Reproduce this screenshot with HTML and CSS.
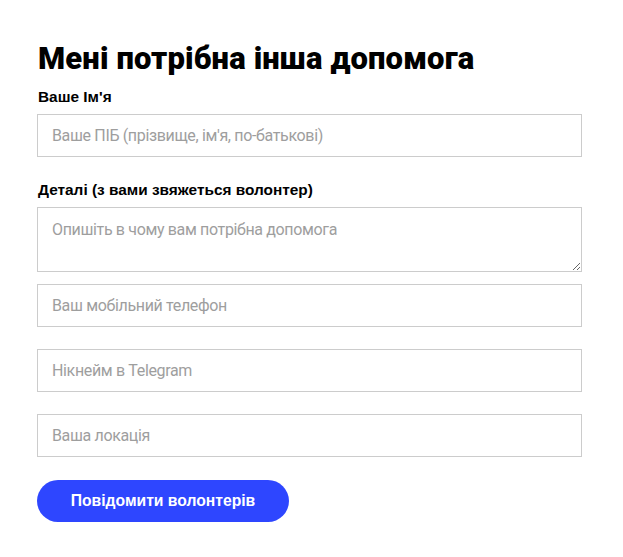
FILE: index.html
```html
<html>
  <head>
    <link rel="stylesheet" href="styles.css">
  </head>
  <body>
    <form class="help-form" onsubmit="return false;">
      <h2 class="title">Мені потрібна інша допомога</h2>

      <label for="name" class="field-label">Ваше Ім'я</label>
      <input type="text" id="name" class="field" placeholder="Ваше ПІБ (прізвище, ім'я, по-батькові)" />

      <label for="details" class="field-label details-label">Деталі (з вами звяжеться волонтер)</label>
      <textarea id="details" class="field area" placeholder="Опишіть в чому вам потрібна допомога"></textarea>

      <input type="tel" class="field phone" placeholder="Ваш мобільний телефон" />
      <input type="text" class="field spaced" placeholder="Нікнейм в Telegram" />
      <input type="text" class="field spaced" placeholder="Ваша локація" />

      <button type="submit" class="submit">Повідомити волонтерів</button>
    </form>
  </body>
</html>
```

FILE: styles.css
```css
*,
*::before,
*::after {
  box-sizing: border-box;
}

body {
  margin: 0;
  background-color: #fff;
  color: #000;
  font-family: "Liberation Sans", Arial, sans-serif;
}

.help-form {
  display: flex;
  flex-direction: column;
  width: 545px;
  margin-left: 37px;
  padding-top: 41px;
}

.title {
  margin: 0 0 11px 1px;
  font-family: Roboto, sans-serif;
  font-weight: 900;
  font-size: 31px;
  line-height: 36px;
  letter-spacing: 0.15px;
}

.field-label {
  font-size: 15.4px;
  font-weight: bold;
  line-height: 18px;
  margin: 0 0 8px 1px;
}

.details-label {
  margin-top: 24px;
}

.field {
  display: block;
  width: 100%;
  height: 43px;
  margin: 0;
  padding: 0 14px;
  border: 1px solid #cccccc;
  border-radius: 0;
  font-family: Roboto, sans-serif;
  font-size: 16px;
  letter-spacing: -0.35px;
  color: #333;
  background: #fff;
  outline: none;
}

.field::placeholder {
  color: #9e9e9e;
}

.area {
  height: 65px;
  padding-top: 12px;
  resize: vertical;
}

.phone {
  margin-top: 12px;
}

.spaced {
  margin-top: 22px;
}

.submit {
  align-self: flex-start;
  width: 252px;
  height: 42px;
  margin-top: 23px;
  border: none;
  border-radius: 21px;
  background-color: #2e46ff;
  color: #fff;
  font-family: "Liberation Sans", Arial, sans-serif;
  font-weight: bold;
  font-size: 15.7px;
  cursor: pointer;
}
```
